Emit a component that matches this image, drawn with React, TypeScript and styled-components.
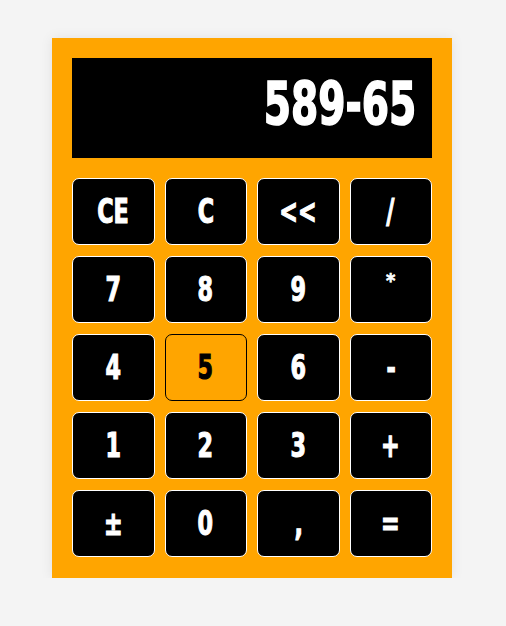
import React from "react";
import styled, { createGlobalStyle } from "styled-components";

const GlobalStyle = createGlobalStyle`
  html, body { margin: 0; padding: 0; background: #f4f4f4; }
  body { font-family: "DejaVu Sans Condensed", "DejaVu Sans", sans-serif; }
`;

const Page = styled.div`
  display: flex;
  justify-content: center;
  align-items: flex-start;
  padding: 38px 2px 0 0;
`;

const Calculator = styled.div`
  width: 400px;
  box-sizing: border-box;
  padding: 20px 20px 21px;
  background: #ffa500;
  box-shadow: 0 0 12px rgba(0, 0, 0, 0.08);
  display: flex;
  flex-direction: column;
  gap: 20px;
`;

const Display = styled.div`
  height: 100px;
  background: #000;
  color: #fff;
  display: flex;
  align-items: center;
  justify-content: flex-end;
  padding: 0 16px 9px 0;
  box-sizing: border-box;
  font-family: "DejaVu Sans Condensed", "DejaVu Sans", sans-serif;
  font-weight: 700;
  font-size: 58px;
  -webkit-text-stroke: 1.6px #fff;
`;

const Readout = styled.span`
  display: inline-block;
  transform: scaleX(0.75);
  transform-origin: right center;
`;

const Keys = styled.div`
  display: grid;
  grid-template-columns: repeat(4, 1fr);
  grid-auto-rows: 67px;
  column-gap: 10px;
  row-gap: 11px;
`;

const Key = styled.button<{ $active?: boolean }>`
  margin: 0;
  padding: 0;
  border-radius: 7px;
  border: 1px solid ${(p) => (p.$active ? "#000" : "#fff")};
  background: ${(p) => (p.$active ? "#ffa500" : "#000")};
  color: ${(p) => (p.$active ? "#000" : "#fff")};
  font-family: "DejaVu Sans Condensed", "DejaVu Sans", sans-serif;
  font-weight: 700;
  font-size: 33px;
  -webkit-text-stroke: 1.1px ${(p) => (p.$active ? "#000" : "#fff")};
  display: flex;
  align-items: center;
  justify-content: center;
  cursor: pointer;
`;

const Label = styled.span<{ $raised?: boolean }>`
  display: inline-block;
  transform: ${(p) => (p.$raised ? "translateY(-9px) scale(0.6)" : "scaleX(0.75)")};
`;

const keys = ["CE", "C", "<<", "/", "7", "8", "9", "*", "4", "5", "6", "-", "1", "2", "3", "+", "±", "0", ",", "="];

export default function App() {
  return (
    <>
      <GlobalStyle />
      <Page>
        <Calculator>
          <Display>
            <Readout>589-65</Readout>
          </Display>
          <Keys>
            {keys.map((k) => (
              <Key key={k} $active={k === "5"}>
                <Label $raised={k === "*"}>{k}</Label>
              </Key>
            ))}
          </Keys>
        </Calculator>
      </Page>
    </>
  );
}
